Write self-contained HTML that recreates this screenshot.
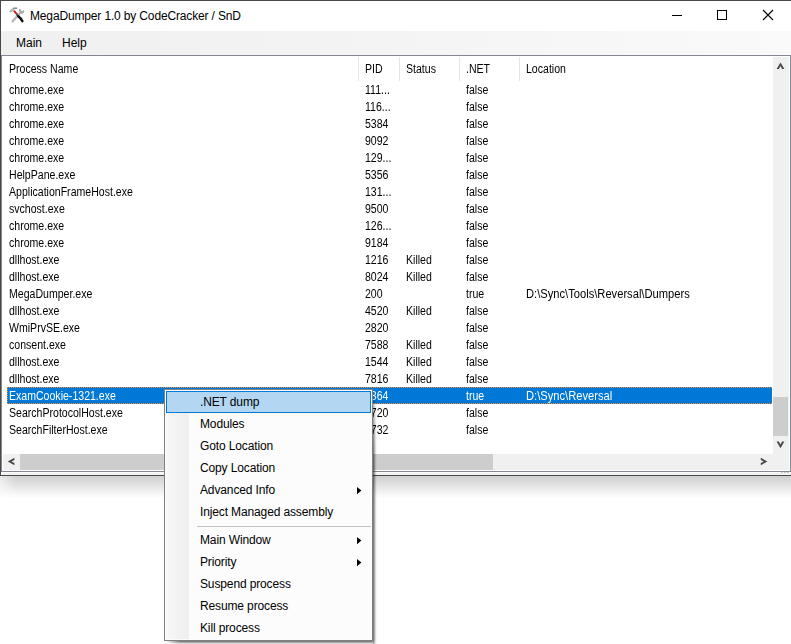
<!DOCTYPE html>
<html><head><meta charset="utf-8">
<style>
*{margin:0;padding:0;box-sizing:border-box}
html,body{width:791px;height:644px;overflow:hidden;background:#fff;font-family:"Liberation Sans",sans-serif;color:#000}
.a{position:absolute}
#win{position:absolute;left:0;top:0;width:791px;height:476px;background:#fff;border-top:1px solid #4b4947;border-left:1px solid #4b4947;border-bottom:1px solid #4b4947}
#shadow{position:absolute;left:0;top:476px;width:791px;height:22px;background:linear-gradient(#cfcfcf,#ffffff)}
.title{left:30px;top:8px;font-size:12px;letter-spacing:-0.15px;white-space:nowrap;line-height:16px}
#menubar{left:1px;top:31px;width:790px;height:24px;background:linear-gradient(90deg,#f0f0f0 0%,#f3f3f3 40%,#fafafa 100%)}
.mi{font-size:12px;top:35px;line-height:16px;white-space:nowrap}
#lv{left:1px;top:55px;width:790px;height:417px;border-top:1px solid #828790;border-left:1px solid #828790;border-right:1px solid #828790;border-bottom:1px solid #828790;background:#fff}
.hdr{font-size:12px;top:61px;line-height:17px;white-space:nowrap;transform:scaleX(0.88);transform-origin:0 0}
.sep{top:57px;width:1px;height:24px;background:#e5e5e5}
.row{position:absolute;left:3px;width:770px;height:17px;font-size:12px;line-height:17px;white-space:nowrap}
.row span{position:absolute;top:1px;transform:scaleX(0.88);transform-origin:0 0}
.c1{left:6px}.c2{left:362px}.c3{left:403px}.c4{left:463px}.c5{left:523px;transform:scaleX(0.93)!important}
.sel{color:#fff}
#vs{left:773px;top:57px;width:16px;height:396px;background:#f0f0f0}
#hs{left:3px;top:454px;width:770px;height:16px;background:#f0f0f0}
#corner{left:773px;top:453px;width:16px;height:17px;background:#f0f0f0}
#menu{left:164px;top:389px;width:209px;height:252px;background:#fcfcfc;border:1px solid #808080}
.strip{left:1px;top:1px;width:23px;height:248px;background:linear-gradient(90deg,#f8f8f8,#eeeeee)}
.it{position:absolute;left:35px;font-size:12px;letter-spacing:-0.13px;line-height:16px;white-space:nowrap}
.arr{position:absolute;left:192px;width:0;height:0;border-top:3.6px solid transparent;border-bottom:3.6px solid transparent;border-left:4.4px solid #000}
</style></head><body>
<div id="win"></div>
<div id="shadow"></div>
<div class="a" style="left:0;top:476px;width:16px;height:22px;background:linear-gradient(90deg,rgba(255,255,255,0.55),rgba(255,255,255,0))"></div>
<div class="a" style="left:2px;top:472px;width:789px;height:3px;background:linear-gradient(#fafafa 0,#fafafa 1px,#f2f2f2 1px)"></div>
<!-- icon -->
<svg class="a" style="left:0;top:0" width="30" height="30" viewBox="0 0 30 30">
  <path d="M8.8 11.9 L11.4 8.7 L13.6 8.1 L15 10.2 L13.6 11.1 L10.6 12.3 Z" fill="#b4b4b4"/>
  <path d="M13.4 7.5 L17.2 7.5 L17.2 8.9 L13.4 8.9 Z" fill="#7c7c7c"/>
  <path d="M19 9.3 L20.4 8.7 L21 10.8 L22.4 11.2 L23.5 9.9 L24.4 10.9 L23.5 13 L21 14.1 L19.5 13.3 Z" fill="#a6a6a6"/>
  <path d="M19.2 14 L12.6 21.3" stroke="#b0b0b0" stroke-width="2.3" stroke-linecap="round"/>
  <path d="M18.6 14.6 L13 20.8" stroke="#ececec" stroke-width="0.9" stroke-dasharray="0.7 1.1"/>
  <path d="M14 10.8 L17 14.4" stroke="#d41a1a" stroke-width="1.9"/>
  <path d="M16.6 14.2 L18 15.9" stroke="#365050" stroke-width="1.9"/>
  <path d="M18.3 16.3 Q20.7 18.2 22.4 21.2" fill="none" stroke="#0e0e0e" stroke-width="2.4" stroke-linecap="round"/>
</svg>
<div class="a title">MegaDumper 1.0 by CodeCracker / SnD</div>
<!-- caption buttons -->
<div class="a" style="left:672px;top:15px;width:10px;height:1px;background:#000"></div>
<div class="a" style="left:717px;top:10px;width:10px;height:10px;border:1px solid #000"></div>
<svg class="a" style="left:762px;top:9px" width="12" height="12" viewBox="0 0 12 12"><path d="M1 1 L11 11 M11 1 L1 11" stroke="#000" stroke-width="1.1"/></svg>

<div class="a" style="left:781px;top:472px;width:2px;height:1px;background:#c4c4c4"></div><div class="a" style="left:784px;top:472px;width:2px;height:1px;background:#c4c4c4"></div><div class="a" style="left:787px;top:472px;width:2px;height:1px;background:#c4c4c4"></div>
<div id="menubar" class="a"></div>
<div class="a mi" style="left:16px">Main</div>
<div class="a mi" style="left:62px">Help</div>

<div id="lv" class="a"></div>
<div class="a hdr" style="left:9px">Process Name</div>
<div class="a sep" style="left:358px"></div>
<div class="a hdr" style="left:365px">PID</div>
<div class="a sep" style="left:399px"></div>
<div class="a hdr" style="left:406px">Status</div>
<div class="a sep" style="left:459px"></div>
<div class="a hdr" style="left:466px">.NET</div>
<div class="a sep" style="left:519px"></div>
<div class="a hdr" style="left:526px">Location</div>

<div id="rows">
<div class="row" style="top:81px"><span class="c1">chrome.exe</span><span class="c2">111...</span><span class="c4">false</span></div>
<div class="row" style="top:98px"><span class="c1">chrome.exe</span><span class="c2">116...</span><span class="c4">false</span></div>
<div class="row" style="top:115px"><span class="c1">chrome.exe</span><span class="c2">5384</span><span class="c4">false</span></div>
<div class="row" style="top:132px"><span class="c1">chrome.exe</span><span class="c2">9092</span><span class="c4">false</span></div>
<div class="row" style="top:149px"><span class="c1">chrome.exe</span><span class="c2">129...</span><span class="c4">false</span></div>
<div class="row" style="top:166px"><span class="c1">HelpPane.exe</span><span class="c2">5356</span><span class="c4">false</span></div>
<div class="row" style="top:183px"><span class="c1">ApplicationFrameHost.exe</span><span class="c2">131...</span><span class="c4">false</span></div>
<div class="row" style="top:200px"><span class="c1">svchost.exe</span><span class="c2">9500</span><span class="c4">false</span></div>
<div class="row" style="top:217px"><span class="c1">chrome.exe</span><span class="c2">126...</span><span class="c4">false</span></div>
<div class="row" style="top:234px"><span class="c1">chrome.exe</span><span class="c2">9184</span><span class="c4">false</span></div>
<div class="row" style="top:251px"><span class="c1">dllhost.exe</span><span class="c2">1216</span><span class="c3">Killed</span><span class="c4">false</span></div>
<div class="row" style="top:268px"><span class="c1">dllhost.exe</span><span class="c2">8024</span><span class="c3">Killed</span><span class="c4">false</span></div>
<div class="row" style="top:285px"><span class="c1">MegaDumper.exe</span><span class="c2">200</span><span class="c4">true</span><span class="c5">D:\Sync\Tools\Reversal\Dumpers</span></div>
<div class="row" style="top:302px"><span class="c1">dllhost.exe</span><span class="c2">4520</span><span class="c3">Killed</span><span class="c4">false</span></div>
<div class="row" style="top:319px"><span class="c1">WmiPrvSE.exe</span><span class="c2">2820</span><span class="c4">false</span></div>
<div class="row" style="top:336px"><span class="c1">consent.exe</span><span class="c2">7588</span><span class="c3">Killed</span><span class="c4">false</span></div>
<div class="row" style="top:353px"><span class="c1">dllhost.exe</span><span class="c2">1544</span><span class="c3">Killed</span><span class="c4">false</span></div>
<div class="row" style="top:370px"><span class="c1">dllhost.exe</span><span class="c2">7816</span><span class="c3">Killed</span><span class="c4">false</span></div>
<div class="a" style="left:7px;top:387px;width:765px;height:17px;background:#0078d7;border:1px dotted #ff8828;border-right:none"></div>
<div class="row sel" style="top:387px"><span class="c1">ExamCookie-1321.exe</span><span class="c2">9364</span><span class="c4">true</span><span class="c5">D:\Sync\Reversal</span></div>
<div class="row" style="top:404px"><span class="c1">SearchProtocolHost.exe</span><span class="c2">6720</span><span class="c4">false</span></div>
<div class="row" style="top:421px"><span class="c1">SearchFilterHost.exe</span><span class="c2">5732</span><span class="c4">false</span></div>
</div>

<div id="vs" class="a"></div>
<div class="a" style="left:773px;top:397px;width:15px;height:39px;background:#cdcdcd"></div>
<div id="hs" class="a"></div>
<div class="a" style="left:20px;top:454px;width:473px;height:16px;background:#cdcdcd"></div>
<div id="corner" class="a"></div>
<svg class="a" style="left:0;top:0" width="791" height="480">
<g fill="#4b4947">
<path d="M776.6 69 L778.9 69 L780.5 66.1 L782.1 69 L784.4 69 L780.5 62.4 Z"/>
<path d="M776.6 441.6 L778.9 441.6 L780.5 444.5 L782.1 441.6 L784.4 441.6 L780.5 448.2 Z"/>
<path d="M14.4 457.7 L14.4 460 L11.5 461.5 L14.4 463 L14.4 465.3 L7.8 461.5 Z"/>
<path d="M760.8 457.7 L760.8 460 L763.7 461.5 L760.8 463 L760.8 465.3 L767.4 461.5 Z"/>
</g></svg>

<div class="a" style="left:373px;top:392px;width:4px;height:252px;background:linear-gradient(90deg,rgba(0,0,0,0.5) 0,rgba(0,0,0,0.5) 1px,rgba(0,0,0,0.33) 1px,rgba(0,0,0,0.33) 2px,rgba(0,0,0,0.14) 2px,rgba(0,0,0,0.14) 3px,rgba(0,0,0,0.04) 3px);-webkit-mask-image:linear-gradient(180deg,transparent 0,rgba(0,0,0,0.5) 14px,#000 60px,#000 248px,rgba(0,0,0,0.6) 252px)"></div>
<div class="a" style="left:166px;top:641px;width:207px;height:3px;background:linear-gradient(180deg,rgba(0,0,0,0.5) 0,rgba(0,0,0,0.5) 1px,rgba(0,0,0,0.33) 1px,rgba(0,0,0,0.33) 2px,rgba(0,0,0,0.14) 2px);-webkit-mask-image:linear-gradient(90deg,transparent 0,rgba(0,0,0,0.5) 6px,#000 14px)"></div>
<div id="menu" class="a">
  <div class="a strip"></div>
  <div class="a" style="left:1px;top:1px;width:205px;height:22px;background:#b3d7f3;border:1px solid #0078d7"></div>
  <div class="a" style="left:32px;top:136px;width:174px;height:1px;background:#c2c2c2"></div>
  <div class="it" style="top:4px">.NET dump</div>
  <div class="it" style="top:26px">Modules</div>
  <div class="it" style="top:48px">Goto Location</div>
  <div class="it" style="top:70px">Copy Location</div>
  <div class="it" style="top:92px">Advanced Info</div>
  <svg class="a" style="left:192px;top:97px" width="6" height="8"><path d="M0 0 L4.4 3.6 L0 7.2 Z" fill="#000"/></svg>
  <div class="it" style="top:114px">Inject Managed assembly</div>
  <div class="it" style="top:142px">Main Window</div>
  <svg class="a" style="left:192px;top:147px" width="6" height="8"><path d="M0 0 L4.4 3.6 L0 7.2 Z" fill="#000"/></svg>
  <div class="it" style="top:164px">Priority</div>
  <svg class="a" style="left:192px;top:169px" width="6" height="8"><path d="M0 0 L4.4 3.6 L0 7.2 Z" fill="#000"/></svg>
  <div class="it" style="top:186px">Suspend process</div>
  <div class="it" style="top:208px">Resume process</div>
  <div class="it" style="top:230px">Kill process</div>
</div>
</body></html>
